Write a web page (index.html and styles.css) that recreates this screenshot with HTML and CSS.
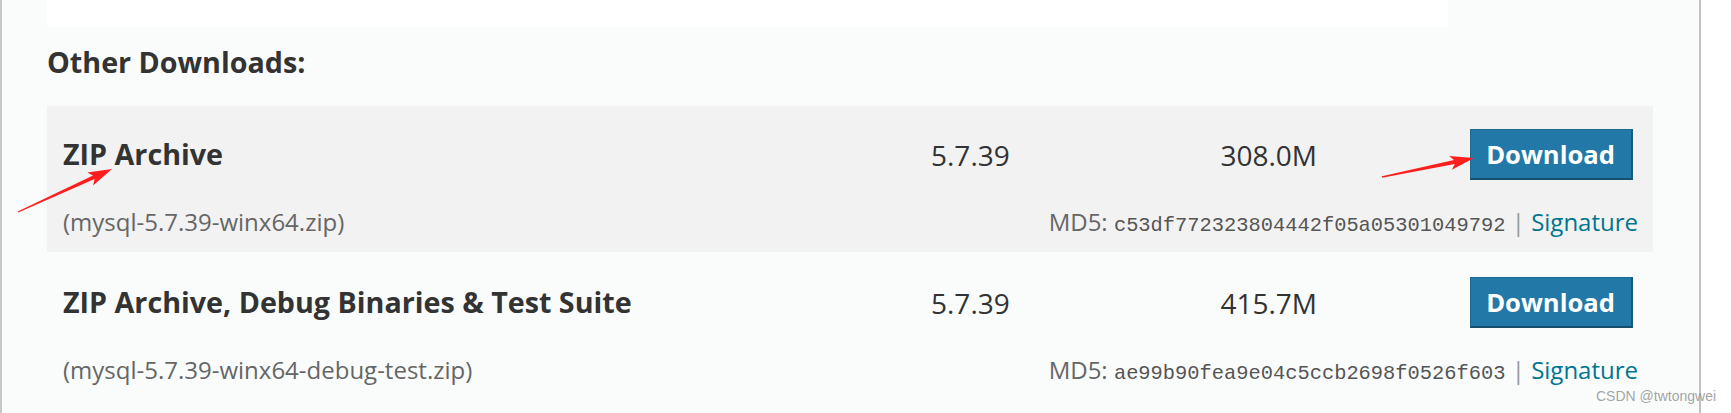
FILE: index.html
```html
<!DOCTYPE html>
<html>
<head>
<meta charset="utf-8">
<title>Other Downloads</title>
<link rel="stylesheet" href="styles.css">
</head>
<body>
<div class="frame">
  <div class="prev-box"></div>
  <h2 class="heading">Other Downloads:</h2>
  <div class="table">
    <div class="dl-row shaded">
      <div class="name">ZIP Archive</div>
      <div class="ver">5.7.39</div>
      <div class="size">308.0M</div>
      <div class="action"><a class="btn">Download</a></div>
      <div class="file">(mysql-5.7.39-winx64.zip)</div>
      <div class="md5">MD5: <code class="hash">c53df772323804442f05a05301049792</code> <span class="sep">|</span> <a class="sig">Signature</a></div>
    </div>
    <div class="dl-row second">
      <div class="name">ZIP Archive, Debug Binaries &amp; Test Suite</div>
      <div class="ver">5.7.39</div>
      <div class="size">415.7M</div>
      <div class="action"><a class="btn">Download</a></div>
      <div class="file">(mysql-5.7.39-winx64-debug-test.zip)</div>
      <div class="md5">MD5: <code class="hash">ae99b90fea9e04c5ccb2698f0526f603</code> <span class="sep">|</span> <a class="sig">Signature</a></div>
    </div>
  </div>
</div>
<svg class="annot" width="1731" height="413" viewBox="0 0 1731 413">
  <polygon points="18.3,212.6 94.6,179.1 93.1,185.4 112,169 87.3,172.6 93.0,175.5 17.7,211.4" />
  <polygon points="1382.1,177.7 1454.8,164.0 1451.9,169.7 1474,158 1449.1,155.9 1454.0,160.0 1381.9,176.3" />
</svg>
<div class="watermark">CSDN @twtongwei</div>
</body>
</html>
```

FILE: styles.css
```css
html, body {
  margin: 0;
  padding: 0;
  background: #ffffff;
  overflow: hidden;
}
body {
  position: relative;
  width: 1731px;
  height: 413px;
  font-family: "Open Sans", "Liberation Sans", sans-serif;
  color: #333333;
}
.frame {
  box-sizing: content-box;
  width: 1652px;
  height: 413px;
  padding-left: 45px;
  border-left: 2px solid #c8c8c8;
  border-right: 2px solid #c2c2c2;
  background: #fafcfc;
}
.prev-box {
  width: 1401px;
  height: 27px;
  background: #ffffff;
}
.heading {
  margin: 16px 0 25px;
  font-size: 28.7px;
  line-height: 38px;
  font-weight: 700;
  color: #333333;
}
.table {
  width: 1606px;
}
.dl-row {
  display: grid;
  grid-template-columns: 1fr 200px 186px 321px;
  grid-template-rows: 51px 34px;
  row-gap: 25px;
  padding: 23px 15px 13px 16px;
  align-items: center;
}
.dl-row.shaded {
  background: #f2f2f2;
}
.dl-row.second {
  padding-top: 25px;
  padding-bottom: 11px;
}
.name {
  font-size: 28.7px;
  line-height: 38px;
  font-weight: 700;
  color: #333333;
  position: relative;
  top: -1px;
}
.ver, .size {
  font-size: 28px;
  line-height: 38px;
  color: #333333;
}
.size {
  text-align: right;
}
.action {
  display: flex;
  justify-content: flex-end;
  padding-right: 5px;
}
.btn {
  display: flex;
  align-items: center;
  height: 51px;
  box-sizing: border-box;
  padding: 0 16px 0 15px;
  background: #2279a8;
  border: 1px solid #1d6790;
  border-bottom: 2px solid #164f6e;
  border-right: 2px solid #1a5a7e;
  color: #ffffff;
  font-size: 25.6px;
  font-weight: 700;
  text-decoration: none;
}
.file {
  font-size: 24px;
  line-height: 34px;
  color: #666666;
  align-self: baseline;
}
.md5 {
  grid-column: 2 / 5;
  text-align: right;
  font-size: 24px;
  line-height: 34px;
  color: #666666;
  align-self: baseline;
  white-space: nowrap;
}
.hash {
  font-family: "Liberation Mono", "DejaVu Sans Mono", monospace;
  font-size: 20.4px;
  color: #555555;
}
.sep {
  color: #999999;
}
.sig {
  color: #00758f;
  text-decoration: none;
}
.annot {
  position: absolute;
  left: 0;
  top: 0;
  pointer-events: none;
}
.annot polygon {
  fill: #ff1e1e;
}
.watermark {
  position: absolute;
  left: 1596px;
  top: 388px;
  font-family: "Liberation Sans", Arial, sans-serif;
  font-size: 14px;
  line-height: 16px;
  color: rgba(140, 140, 140, 0.8);
  white-space: nowrap;
}
```
